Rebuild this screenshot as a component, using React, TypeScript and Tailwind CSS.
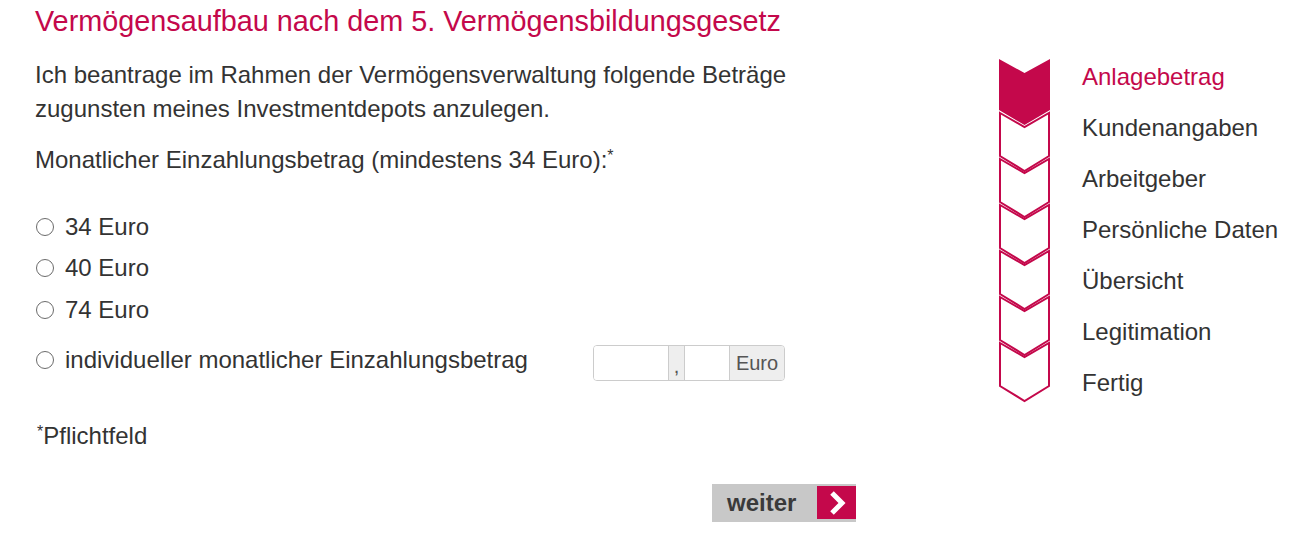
import React from "react";

const CRIMSON = "#c4084b";

function Radio({ label }: { label: string }) {
  return (
    <div className="flex items-center h-[41.5px]">
      <span className="ml-[1px] w-[18px] h-[18px] rounded-full border border-[#6b6b6b] bg-white shrink-0" />
      <span className="ml-[11px]">{label}</span>
    </div>
  );
}

function Stepper() {
  const shapes = [];
  for (let k = 0; k < 7; k++) {
    if (k === 0) {
      shapes.push(
        <polygon key={k} points="0,0 25.5,14 51,0 51,51 25.5,66 0,51" fill={CRIMSON} />
      );
    } else {
      const t = 46 * k + 8;
      const b = 51 + 46 * k;
      shapes.push(
        <polygon
          key={k}
          points={`1,${t} 25.5,${t + 14} 50,${t} 50,${b} 25.5,${b + 15} 1,${b}`}
          fill="white"
          stroke={CRIMSON}
          strokeWidth={2}
          strokeLinejoin="miter"
        />
      );
    }
  }
  return (
    <svg width="51" height="345" viewBox="0 0 51 345" className="block">
      {shapes.slice().reverse()}
    </svg>
  );
}

export default function App() {
  const steps = [
    "Anlagebetrag",
    "Kundenangaben",
    "Arbeitgeber",
    "Persönliche Daten",
    "Übersicht",
    "Legitimation",
    "Fertig",
  ];
  return (
    <div
      className="w-[1316px] h-[538px] bg-white text-[#333333] overflow-hidden"
      style={{ fontFamily: '"Liberation Sans", Arial, sans-serif' }}
    >
      <div className="flex">
        <div className="w-[999px] pl-[35px] shrink-0">
          <h1 className="text-[28.8px] leading-[32px] mt-[5px] text-[#c4084b] font-normal">
            Vermögensaufbau nach dem 5. Vermögensbildungsgesetz
          </h1>
          <p className="text-[24px] leading-[34px] mt-[21px]">
            Ich beantrage im Rahmen der Vermögensverwaltung folgende Beträge
            <br />
            zugunsten meines Investmentdepots anzulegen.
          </p>
          <p className="text-[24px] leading-[34px] mt-[17px]">
            Monatlicher Einzahlungsbetrag (mindestens 34 Euro):
            <sup className="text-[16px] relative -top-[7px]">*</sup>
          </p>
          <div className="text-[24px] mt-[29px]">
            <Radio label="34 Euro" />
            <Radio label="40 Euro" />
            <Radio label="74 Euro" />
            <div className="flex items-center mt-[14px]">
              <div className="w-[558px] flex items-center h-[36px] -mt-[6px]">
                <span className="ml-[1px] w-[18px] h-[18px] rounded-full border border-[#6b6b6b] bg-white shrink-0" />
                <span className="ml-[11px]">individueller monatlicher Einzahlungsbetrag</span>
              </div>
              <div className="flex h-[36px] border border-[#cccccc] rounded-[4px] overflow-hidden">
                <div className="w-[74px] bg-white" />
                <div className="w-[17px] bg-[#eeeeee] border-l border-r border-[#cccccc] text-[20px] text-[#555555] flex items-end justify-center pb-[4px] leading-none">
                  ,
                </div>
                <div className="w-[44px] bg-white" />
                <div className="w-[55px] bg-[#eeeeee] border-l border-[#cccccc] text-[20px] text-[#555555] flex items-center justify-center">
                  Euro
                </div>
              </div>
            </div>
          </div>
          <p className="text-[24px] leading-[34px] mt-[38px] ml-[2px]">
            <sup className="text-[16px] relative -top-[7px]">*</sup>Pflichtfeld
          </p>
          <div className="flex ml-[677px] mt-[31px] w-[144px] h-[38px] bg-[#c8c8c8] items-center justify-between">
            <span className="ml-[15px] text-[24px] font-bold text-[#3a3a3a] leading-none">weiter</span>
            <div className="w-[39px] h-[33px] bg-[#c4084b] flex items-center justify-center">
              <svg width="22" height="28" viewBox="0 0 22 28">
                <path d="M6 4 L16 14 L6 24" fill="none" stroke="white" strokeWidth="5" strokeLinejoin="miter" />
              </svg>
            </div>
          </div>
        </div>
        <div className="flex pt-[59px]">
          <Stepper />
          <div className="ml-[32px] -mt-[8px] text-[24px]">
            {steps.map((s, i) => (
              <div
                key={s}
                className={`h-[51px] flex items-center ${i === 0 ? "text-[#c4084b]" : "text-[#333333]"}`}
              >
                {s}
              </div>
            ))}
          </div>
        </div>
      </div>
    </div>
  );
}
